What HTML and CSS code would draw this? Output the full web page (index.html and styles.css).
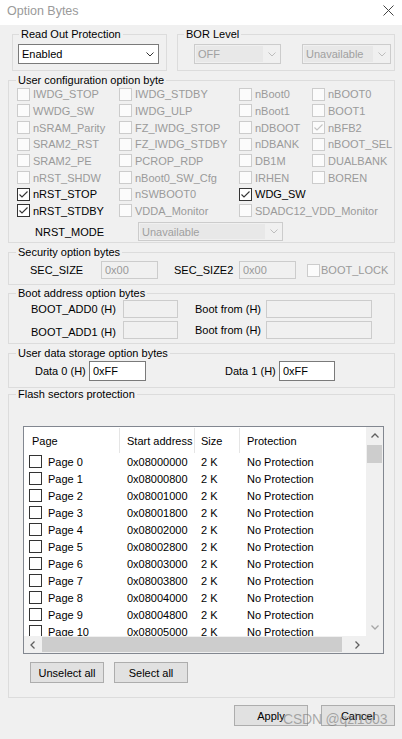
FILE: index.html
```html
<!DOCTYPE html>
<html>
<head>
<meta charset="utf-8">
<title>Option Bytes</title>
<link rel="stylesheet" href="styles.css">
</head>
<body>
<div class="window">
  <div class="titlebar">
    <span class="title">Option Bytes</span>
    <svg class="close" viewBox="0 0 11 11"><path d="M0.5 0.5 10.5 10.5 M10.5 0.5 0.5 10.5"/></svg>
  </div>
  <div class="content">
    <div class="row-top">
      <section class="grp grp-rop">
        <span class="lg">Read Out Protection</span>
        <div class="combo combo-rop"><span class="combo-text">Enabled</span><span class="combo-arrow"><svg class="chev" viewBox="0 0 8 5"><path d="M0.5 0.5 4 4 7.5 0.5"/></svg></span></div>
      </section>
      <section class="grp grp-bor">
        <span class="lg">BOR Level</span>
        <div class="bor-row">
          <div class="combo dis combo-off"><span class="combo-text">OFF</span><span class="combo-arrow"><svg class="chev" viewBox="0 0 8 5"><path d="M0.5 0.5 4 4 7.5 0.5"/></svg></span></div>
          <div class="combo dis combo-unav"><span class="combo-text">Unavailable</span><span class="combo-arrow"><svg class="chev" viewBox="0 0 8 5"><path d="M0.5 0.5 4 4 7.5 0.5"/></svg></span></div>
        </div>
      </section>
    </div>

    <section class="grp grp-user">
      <span class="lg">User configuration option byte</span>
      <div class="opts">
        <div class="opt dis"><span class="cb"></span><span>IWDG_STOP</span></div>
        <div class="opt dis"><span class="cb"></span><span>IWDG_STDBY</span></div>
        <div class="opt dis"><span class="cb"></span><span>nBoot0</span></div>
        <div class="opt dis"><span class="cb"></span><span>nBOOT0</span></div>

        <div class="opt dis"><span class="cb"></span><span>WWDG_SW</span></div>
        <div class="opt dis"><span class="cb"></span><span>IWDG_ULP</span></div>
        <div class="opt dis"><span class="cb"></span><span>nBoot1</span></div>
        <div class="opt dis"><span class="cb"></span><span>BOOT1</span></div>

        <div class="opt dis"><span class="cb"></span><span>nSRAM_Parity</span></div>
        <div class="opt dis"><span class="cb"></span><span>FZ_IWDG_STOP</span></div>
        <div class="opt dis"><span class="cb"></span><span>nDBOOT</span></div>
        <div class="opt dis"><span class="cb"><svg viewBox="0 0 11 11"><path d="M1.5 5.5 4 8 9.5 2.5"/></svg></span><span>nBFB2</span></div>

        <div class="opt dis"><span class="cb"></span><span>SRAM2_RST</span></div>
        <div class="opt dis"><span class="cb"></span><span>FZ_IWDG_STDBY</span></div>
        <div class="opt dis"><span class="cb"></span><span>nDBANK</span></div>
        <div class="opt dis"><span class="cb"></span><span>nBOOT_SEL</span></div>

        <div class="opt dis"><span class="cb"></span><span>SRAM2_PE</span></div>
        <div class="opt dis"><span class="cb"></span><span>PCROP_RDP</span></div>
        <div class="opt dis"><span class="cb"></span><span>DB1M</span></div>
        <div class="opt dis"><span class="cb"></span><span>DUALBANK</span></div>

        <div class="opt dis"><span class="cb"></span><span>nRST_SHDW</span></div>
        <div class="opt dis"><span class="cb"></span><span>nBoot0_SW_Cfg</span></div>
        <div class="opt dis"><span class="cb"></span><span>IRHEN</span></div>
        <div class="opt dis"><span class="cb"></span><span>BOREN</span></div>

        <div class="opt"><span class="cb"><svg viewBox="0 0 11 11"><path d="M1.5 5.5 4 8 9.5 2.5"/></svg></span><span>nRST_STOP</span></div>
        <div class="opt dis"><span class="cb"></span><span>nSWBOOT0</span></div>
        <div class="opt span2"><span class="cb"><svg viewBox="0 0 11 11"><path d="M1.5 5.5 4 8 9.5 2.5"/></svg></span><span>WDG_SW</span></div>

        <div class="opt"><span class="cb"><svg viewBox="0 0 11 11"><path d="M1.5 5.5 4 8 9.5 2.5"/></svg></span><span>nRST_STDBY</span></div>
        <div class="opt dis"><span class="cb"></span><span>VDDA_Monitor</span></div>
        <div class="opt dis span2"><span class="cb"></span><span>SDADC12_VDD_Monitor</span></div>
      </div>
      <div class="nrst-row">
        <span class="nrst-label">NRST_MODE</span>
        <div class="combo dis combo-nrst"><span class="combo-text">Unavailable</span><span class="combo-arrow"><svg class="chev" viewBox="0 0 8 5"><path d="M0.5 0.5 4 4 7.5 0.5"/></svg></span></div>
      </div>
    </section>

    <section class="grp grp-sec">
      <span class="lg">Security option bytes</span>
      <div class="sec-row">
        <span class="lbl w-sec1">SEC_SIZE</span>
        <div class="field dis w57">0x00</div>
        <span class="lbl w-sec2">SEC_SIZE2</span>
        <div class="field dis w57">0x00</div>
        <div class="opt dis boot-lock"><span class="cb"></span><span>BOOT_LOCK</span></div>
      </div>
    </section>

    <section class="grp grp-boot">
      <span class="lg">Boot address option bytes</span>
      <div class="boot-row">
        <span class="lbl w-boot1">BOOT_ADD0 (H)</span>
        <div class="field dis w55"></div>
        <span class="lbl w-boot2">Boot from (H)</span>
        <div class="field dis w106"></div>
      </div>
      <div class="boot-row second">
        <span class="lbl w-boot1 low">BOOT_ADD1 (H)</span>
        <div class="field dis w55"></div>
        <span class="lbl w-boot2">Boot from (H)</span>
        <div class="field dis w106"></div>
      </div>
    </section>

    <section class="grp grp-data">
      <span class="lg">User data storage option bytes</span>
      <div class="data-row">
        <span class="lbl w-data1">Data 0 (H)</span>
        <div class="field edit w57">0xFF</div>
        <span class="lbl w-data2">Data 1 (H)</span>
        <div class="field edit w56">0xFF</div>
      </div>
    </section>

    <section class="grp grp-flash">
      <span class="lg">Flash sectors protection</span>
      <div class="listbox">
        <div class="list-view">
          <div class="list-head">
            <span class="hc">Page</span>
            <span class="hc">Start address</span>
            <span class="hc hc-size">Size</span>
            <span class="hc hc-last">Protection</span>
          </div>
          <div class="list-row"><span class="c-page"><span class="cb"></span>Page 0</span><span class="c-addr">0x08000000</span><span class="c-size">2 K</span><span class="c-prot">No Protection</span></div>
          <div class="list-row"><span class="c-page"><span class="cb"></span>Page 1</span><span class="c-addr">0x08000800</span><span class="c-size">2 K</span><span class="c-prot">No Protection</span></div>
          <div class="list-row"><span class="c-page"><span class="cb"></span>Page 2</span><span class="c-addr">0x08001000</span><span class="c-size">2 K</span><span class="c-prot">No Protection</span></div>
          <div class="list-row"><span class="c-page"><span class="cb"></span>Page 3</span><span class="c-addr">0x08001800</span><span class="c-size">2 K</span><span class="c-prot">No Protection</span></div>
          <div class="list-row"><span class="c-page"><span class="cb"></span>Page 4</span><span class="c-addr">0x08002000</span><span class="c-size">2 K</span><span class="c-prot">No Protection</span></div>
          <div class="list-row"><span class="c-page"><span class="cb"></span>Page 5</span><span class="c-addr">0x08002800</span><span class="c-size">2 K</span><span class="c-prot">No Protection</span></div>
          <div class="list-row"><span class="c-page"><span class="cb"></span>Page 6</span><span class="c-addr">0x08003000</span><span class="c-size">2 K</span><span class="c-prot">No Protection</span></div>
          <div class="list-row"><span class="c-page"><span class="cb"></span>Page 7</span><span class="c-addr">0x08003800</span><span class="c-size">2 K</span><span class="c-prot">No Protection</span></div>
          <div class="list-row"><span class="c-page"><span class="cb"></span>Page 8</span><span class="c-addr">0x08004000</span><span class="c-size">2 K</span><span class="c-prot">No Protection</span></div>
          <div class="list-row"><span class="c-page"><span class="cb"></span>Page 9</span><span class="c-addr">0x08004800</span><span class="c-size">2 K</span><span class="c-prot">No Protection</span></div>
          <div class="list-row"><span class="c-page"><span class="cb"></span>Page 10</span><span class="c-addr">0x08005000</span><span class="c-size">2 K</span><span class="c-prot">No Protection</span></div>
        </div>
        <div class="vscroll">
          <span class="sb-btn"><svg class="arr" viewBox="0 0 8 5"><path d="M0.5 4.5 4 1 7.5 4.5"/></svg></span>
          <span class="sb-track v"><span class="thumb-v"></span></span>
          <span class="sb-btn"><svg class="arr light" viewBox="0 0 8 5"><path d="M0.5 0.5 4 4 7.5 0.5"/></svg></span>
        </div>
        <div class="hscroll">
          <span class="sb-btn"><svg class="arr-h" viewBox="0 0 5 8"><path d="M4.5 0.5 1 4 4.5 7.5"/></svg></span>
          <span class="sb-track h"><span class="thumb-h"></span></span>
          <span class="sb-btn"><svg class="arr-h" viewBox="0 0 5 8"><path d="M0.5 0.5 4 4 0.5 7.5"/></svg></span>
        </div>
        <div class="corner"></div>
      </div>
      <div class="sel-row">
        <button class="btn">Unselect all</button>
        <button class="btn">Select all</button>
      </div>
    </section>

    <div class="footer">
      <button class="btn">Apply</button>
      <button class="btn">Cancel</button>
    </div>
  </div>
  <div class="watermark">CSDN @qzl1603</div>
</div>
</body>
</html>
```

FILE: styles.css
```css
* { box-sizing: border-box; }
html, body { margin: 0; padding: 0; }
body {
  background: #f0f0f0;
  font-family: "Liberation Sans", Arial, sans-serif;
  font-size: 11px;
  color: #000;
}
.window {
  position: relative;
  width: 402px;
  height: 739px;
  overflow: hidden;
}
.titlebar {
  height: 25px;
  background: #fff;
  display: flex;
  justify-content: space-between;
  padding: 0 8px 0 7px;
}
.title {
  font-size: 12.5px;
  color: #9a9a9a;
  line-height: 23px;
}
.close {
  width: 11px;
  height: 11px;
  margin-top: 5px;
  fill: none;
  stroke: #444;
  stroke-width: 1;
}
.content {
  padding: 0 7px 0 8px;
}

/* group boxes: a border with its caption pulled up over the top line */
.grp {
  border: 1px solid #dcdcdc;
}
.lg {
  display: block;
  width: fit-content;
  height: 13px;
  line-height: 13px;
  margin: -7px 0 0 7px;
  padding: 0 2px;
  background: #f0f0f0;
  white-space: nowrap;
}
.row-top {
  display: flex;
  gap: 10px;
  margin: 9px 0 0 4px;
}
.row-top .lg { margin-left: 6px; }
.grp-rop { width: 155px; padding: 3px 0 6px 5px; }
.grp-bor { width: 218px; padding: 3px 0 6px 16px; }
.grp-bor .lg { margin-left: -10px; }
.combo-rop { width: 141px; }
.grp-rop .lg { margin-left: 1px; }
.row-top .lg { margin-top: -10px; }
.row-top .combo { margin-top: 3px; }
.bor-row {
  display: flex;
  gap: 21px;
}
.combo-off { width: 87px; }
.combo-unav { width: 89px; }

/* combo box */
.combo {
  display: flex;
  align-items: center;
  height: 20px;
  border: 1px solid #7a7a7a;
  background: #fff;
}
.combo-text {
  flex: 1;
  align-self: stretch;
  display: flex;
  align-items: center;
  padding-left: 3px;
  white-space: nowrap;
}
.combo-arrow {
  width: 17px;
  display: flex;
  justify-content: center;
}
.chev {
  width: 8px;
  height: 5px;
  fill: none;
  stroke: #333;
  stroke-width: 1;
}
.combo.dis {
  border-color: #cccccc;
  background: #f0f0f0;
  color: #a0a0a0;
}
.combo.dis .combo-text {
  background: #e8e8e8;
  margin: 1px 0 1px 1px;
  padding-left: 2px;
}
.combo.dis .chev { stroke: #bdbdbd; }

/* user configuration */
.grp-user { margin-top: 9px; padding-bottom: 1px; }
.opts {
  display: grid;
  grid-template-columns: 102px 120px 73px 1fr;
  grid-auto-rows: 16.67px;
  padding-left: 8px;
  margin-top: -1px;
}
.span2 { grid-column: span 2; }
.opt {
  display: flex;
  align-items: center;
  gap: 3px;
  white-space: nowrap;
}
.opt.dis { color: #9a9a9a; }
.cb {
  width: 13px;
  height: 13px;
  border: 1px solid #333;
  background: #fff;
  flex: none;
  display: flex;
  align-items: center;
  justify-content: center;
}
.cb svg {
  width: 11px;
  height: 11px;
  fill: none;
  stroke: #333;
  stroke-width: 1.1;
}
.opt.dis .cb {
  border-color: #cccccc;
  background: #fbfbfb;
}
.opt.dis .cb svg { stroke: #c4c4c4; }

.nrst-row {
  display: flex;
  align-items: center;
  margin-top: 3px;
  padding-left: 26px;
}
.nrst-label { width: 103px; }
.combo-nrst { width: 145px; height: 19px; }

/* generic label + field */
.lbl { white-space: nowrap; }
.field {
  height: 18px;
  border: 1px solid #cccccc;
  background: #f0f0f0;
  display: flex;
  align-items: center;
  padding-left: 3px;
}
.field.dis { color: #999; }
.field.edit {
  height: 20px;
  border-color: #7a7a7a;
  background: #fff;
  color: #000;
}
.w55 { width: 55px; }
.w56 { width: 56px; }
.w57 { width: 57px; }
.w106 { width: 106px; }

/* security */
.grp-sec { margin-top: 9px; padding-bottom: 5px; }
.sec-row {
  display: flex;
  align-items: center;
  margin-top: 2px;
  padding-left: 21px;
}
.w-sec1 { width: 71px; }
.w-sec2 { width: 65px; margin-left: 16px; }
.boot-lock { margin-left: 11px; gap: 1px; }

/* boot address */
.grp-boot { margin-top: 8px; padding-bottom: 4px; }
.boot-row {
  display: flex;
  align-items: center;
  padding-left: 22px;
}
.boot-row.second { margin-top: 3px; }
.w-boot1 { width: 92px; }
.w-boot2 { width: 71px; margin-left: 17px; }
.low { position: relative; top: 2px; }

/* user data */
.grp-data { margin-top: 9px; padding-bottom: 6px; }
.data-row {
  display: flex;
  align-items: center;
  margin-top: 1px;
  padding-left: 26px;
}
.w-data1 { width: 54px; }
.w-data2 { width: 54px; margin-left: 79px; }

/* flash sectors */
.grp-flash { margin-top: 6px; padding-bottom: 14px; }
.listbox {
  margin: 25px 0 0 14px;
  width: 361px;
  height: 228px;
  border: 1px solid #828790;
  background: #fff;
  display: grid;
  grid-template-columns: 1fr 17px;
  grid-template-rows: 1fr 17px;
}
.list-view {
  overflow: hidden;
  min-height: 0;
}
.list-head, .list-row {
  display: grid;
  grid-template-columns: 96px 75px 45px 1fr;
  white-space: nowrap;
}
.list-head { height: 26px; }
.hc {
  display: flex;
  align-items: center;
  padding-left: 7px;
  border-right: 1px solid #e5e5e5;
  margin: 1px 0 0;
}
.hc:first-child { padding-left: 8px; }
.hc-size { padding-left: 6px; }
.hc-last { border-right: none; }
.list-row {
  height: 17px;
  align-items: center;
}
.c-page {
  display: flex;
  align-items: center;
  padding-left: 5px;
  gap: 6px;
}
.c-addr { padding-left: 7px; }
.c-size { padding-left: 6px; }
.c-prot { padding-left: 7px; }

.vscroll {
  background: #f0f0f0;
  display: flex;
  flex-direction: column;
}
.hscroll {
  background: #f0f0f0;
  display: flex;
}
.corner { background: #f0f0f0; }
.sb-btn {
  flex: none;
  width: 17px;
  height: 17px;
  display: flex;
  align-items: center;
  justify-content: center;
}
.sb-track { flex: 1; display: flex; }
.sb-track.v { flex-direction: column; }
.thumb-v {
  height: 18px;
  margin: 1px 1px 0;
  background: #cdcdcd;
}
.thumb-h {
  width: 300px;
  margin: 1px 0 1px 1px;
  background: #cdcdcd;
}
.arr {
  width: 8px;
  height: 5px;
  fill: none;
  stroke: #606060;
  stroke-width: 1.3;
}
.arr.light { stroke: #a6a6a6; }
.arr-h {
  width: 5px;
  height: 8px;
  fill: none;
  stroke: #606060;
  stroke-width: 1.3;
}

.sel-row {
  display: flex;
  gap: 10px;
  margin: 8px 0 0 21px;
}
.btn {
  width: 74px;
  height: 21px;
  padding: 0;
  border: 1px solid #adadad;
  background: #e1e1e1;
  font-family: "Liberation Sans", Arial, sans-serif;
  font-size: 11px;
  color: #000;
  border-radius: 0;
}
.footer {
  display: flex;
  justify-content: flex-end;
  gap: 13px;
  margin-top: 7px;
}
.watermark {
  position: absolute;
  left: 283px;
  top: 712px;
  font-size: 14px;
  line-height: 14px;
  letter-spacing: -0.2px;
  color: rgba(120, 120, 120, 0.6);
  white-space: nowrap;
}
```
